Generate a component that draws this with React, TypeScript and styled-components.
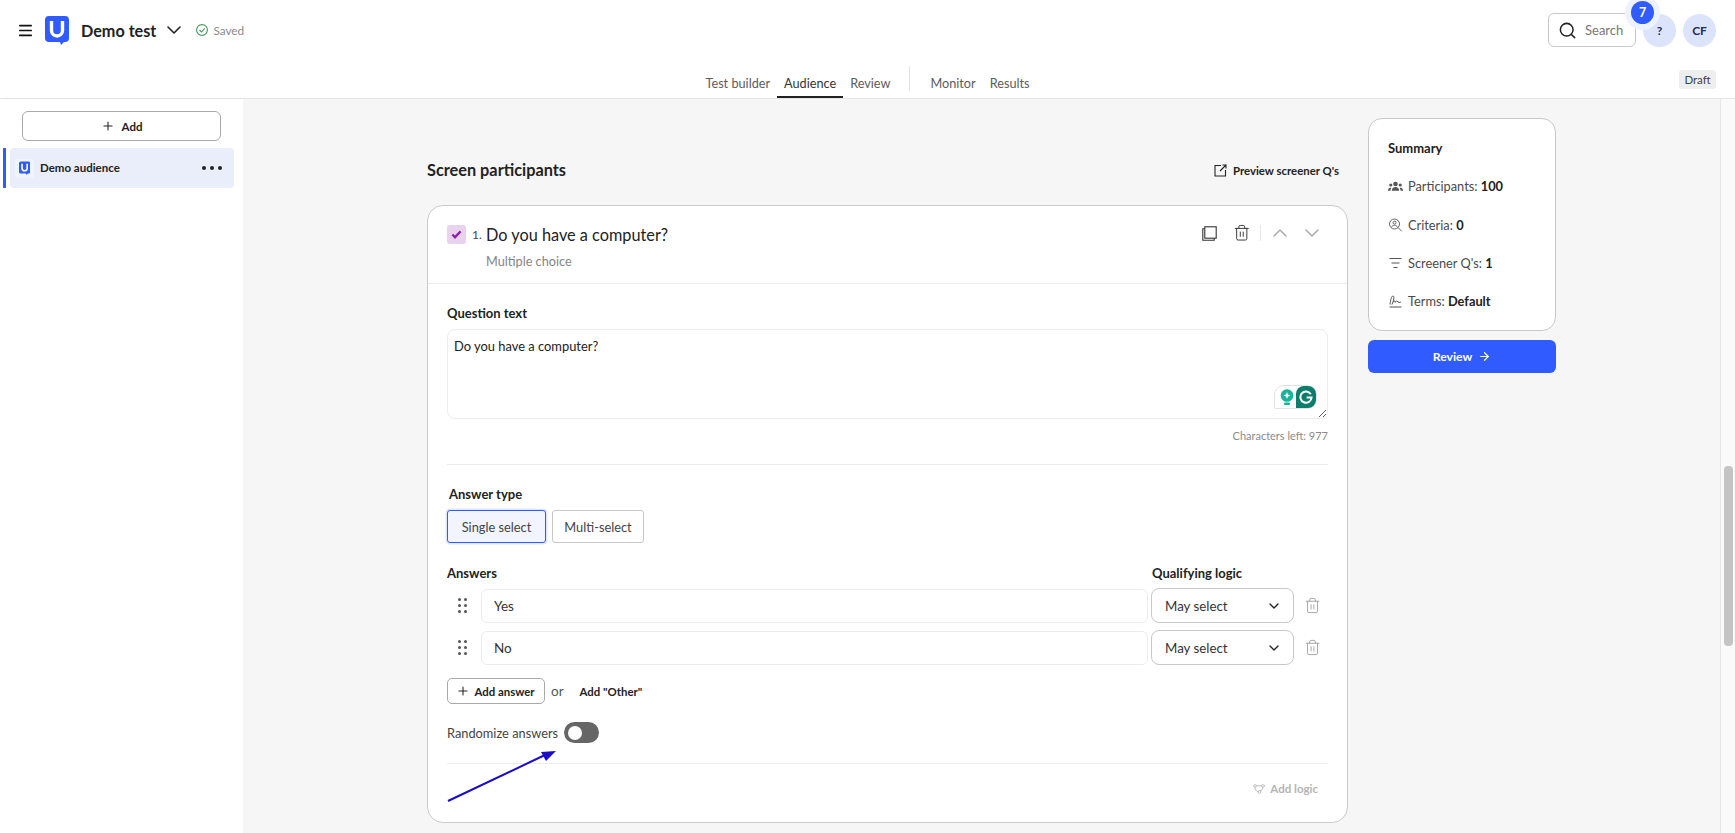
import styled, { createGlobalStyle } from "styled-components";
import { Menu, ChevronDown, ChevronUp, Plus, Search, Trash2, ArrowRight } from "lucide-react";

const GlobalStyle = createGlobalStyle`
  * { box-sizing: border-box; }
  html, body { margin: 0; height: 100%; overflow: hidden; }
  body {
    background: #fff;
    color: #222;
    font-family: Lato, "Open Sans", Arial, sans-serif;
  }
`;

const Page = styled.div`
  height: 833px;
  display: flex;
  flex-direction: column;
`;

const Header = styled.header`
  height: 99px;
  flex: none;
  border-bottom: 1px solid #e7e7e7;
  display: flex;
  flex-direction: column;
`;

const TopBar = styled.div`
  height: 60px;
  display: flex;
  align-items: flex-start;
  justify-content: space-between;
  padding: 13px 19px 0 20px;
`;

const TopLeft = styled.div`
  display: flex;
  align-items: center;
  height: 34px;
`;

const MenuIcon = styled(Menu)`
  margin: 0 11px 0 -3px;
`;

const NameChevron = styled(ChevronDown)`
  margin: 0 9px 0 6px;
`;

const TestName = styled.span`
  font-size: 16.2px;
  font-weight: 700;
  color: #222;
  margin-left: 12px;
`;

const SavedText = styled.span`
  font-size: 11.8px;
  color: #8a8a8a;
  margin-left: 4px;
`;

const TopRight = styled.div`
  display: flex;
  align-items: center;
  height: 34px;
`;

const SearchBox = styled.div`
  width: 88px;
  height: 34px;
  border: 1px solid #c8c8c8;
  border-radius: 6px;
  display: flex;
  align-items: center;
  padding-left: 9px;
  gap: 8px;
  font-size: 13px;
  color: #777;
  margin-right: 7px;
`;

const Circle = styled.div<{ $gap?: number }>`
  position: relative;
  width: 33px;
  height: 33px;
  border-radius: 50%;
  background: #dce4fb;
  color: #1d2a5e;
  font-size: 12px;
  font-weight: 700;
  display: flex;
  align-items: center;
  justify-content: center;
  margin-left: ${(p) => p.$gap ?? 0}px;
`;

const Badge = styled.div`
  position: absolute;
  top: -13px;
  left: -12px;
  width: 23px;
  height: 23px;
  border-radius: 50%;
  background: #2f5bff;
  color: #fff;
  font-size: 12.5px;
  font-weight: 700;
  display: flex;
  align-items: center;
  justify-content: center;
  box-shadow: 0 0 0 6px #eef2fe;
`;

const TabRow = styled.div`
  flex: 1;
  display: grid;
  grid-template-columns: 1fr auto 1fr;
`;

const Tabs = styled.nav`
  grid-column: 2;
  display: flex;
  align-items: stretch;
  height: 38px;
`;

const Tab = styled.a<{ $active?: boolean }>`
  display: flex;
  align-items: center;
  padding: 9px 7px 0;
  font-size: 12.7px;
  color: ${(p) => (p.$active ? "#333" : "#5c5c5c")};
  border-bottom: 2px solid ${(p) => (p.$active ? "#222" : "transparent")};
`;

const TabDivider = styled.div`
  width: 1px;
  height: 25px;
  margin: 6px 13px 0 12px;
  background: #e3e3e3;
`;

const DraftTag = styled.div`
  justify-self: end;
  align-self: start;
  margin: 10px 19px 0 0;
  width: 37px;
  height: 19px;
  border-radius: 3px;
  background: #eeeeee;
  font-size: 11.5px;
  color: #444;
  display: flex;
  align-items: center;
  justify-content: center;
`;

const Body = styled.div`
  flex: 1;
  min-height: 0;
  display: flex;
`;

const Sidebar = styled.aside`
  width: 243px;
  flex: none;
  background: #fff;
  box-shadow: 2px 0 4px rgba(0, 0, 0, 0.05);
  padding-top: 12px;
`;

const AddButton = styled.button`
  display: flex;
  align-items: center;
  justify-content: center;
  gap: 7px;
  width: 199px;
  height: 30px;
  margin-left: 22px;
  border: 1px solid #a9a9a9;
  border-radius: 6px;
  background: #fff;
  font: 700 11.5px Lato, sans-serif;
  color: #222;
`;

const AudienceRow = styled.div`
  display: flex;
  align-items: center;
  height: 40px;
  margin: 7px 9px 0 3px;
  border-left: 3px solid #2f5bff;
  padding-left: 4px;
`;

const AudienceBody = styled.div`
  flex: 1;
  height: 40px;
  display: flex;
  align-items: center;
  background: #eaeefb;
  border-radius: 4px;
  padding: 0 12px 0 5px;
`;

const LogoTile = styled.div`
  width: 19px;
  height: 19px;
  border-radius: 3px;
  background: #f1f4fd;
  display: flex;
  align-items: center;
  justify-content: center;
`;

const AudienceName = styled.span`
  flex: 1;
  font-size: 11.5px;
  font-weight: 700;
  margin: 0 0 1px 6px;
`;

const Dots = styled.div`
  display: flex;
  gap: 4px;
  span {
    width: 4px;
    height: 4px;
    border-radius: 50%;
    background: #222;
  }
`;

const Main = styled.main`
  flex: 1;
  background: #f6f6f6;
  padding: 19px 0 0 184px;
  display: flex;
  align-items: flex-start;
  gap: 20px;
  overflow: hidden;
`;

const Scrollbar = styled.div`
  width: 15px;
  flex: none;
  background: #fafafa;
  border-left: 1px solid #e6e6e6;
  padding: 367px 2px 0 3px;
`;

const ScrollThumb = styled.div`
  height: 180px;
  border-radius: 4px;
  background: #c4c4c4;
`;

const Column = styled.div`
  width: 921px;
  flex: none;
`;

const SectionHead = styled.div`
  display: flex;
  align-items: center;
  justify-content: space-between;
  height: 30px;
  margin: 37px 9px 20px 0;
`;

const SectionTitle = styled.h2`
  margin: 0 0 2px;
  font-size: 16.3px;
  font-weight: 700;
  color: #222;
`;

const PreviewLink = styled.a`
  display: flex;
  align-items: center;
  gap: 6px;
  font-size: 11.4px;
  font-weight: 700;
  color: #222;
`;

const Card = styled.section`
  height: 618px;
  background: #fff;
  border: 1px solid #cbcbcb;
  border-radius: 16px;
`;

const CardHead = styled.div`
  height: 78px;
  border-bottom: 1px solid #ebebeb;
  padding: 19px 23px 0 19px;
  display: flex;
  align-items: flex-start;
`;

const TypeTile = styled.div`
  width: 19px;
  height: 19px;
  border-radius: 3px;
  background: #e8d2ee;
  display: flex;
  align-items: center;
  justify-content: center;
  flex: none;
`;

const QuestionNo = styled.span`
  font-size: 12px;
  color: #444;
  width: 14px;
  margin-left: 6px;
  line-height: 19px;
  flex: none;
`;

const QuestionHead = styled.div`
  flex: 1;
`;

const QuestionTitle = styled.div`
  font-size: 16.3px;
  line-height: 20px;
  color: #222;
`;

const QuestionKind = styled.div`
  font-size: 12.7px;
  color: #858585;
  margin-top: 8px;
`;

const CardTools = styled.div`
  display: flex;
  align-items: center;
  height: 16px;
  color: #333;
`;

const ToolTrash = styled(Trash2)`
  margin-left: 16px;
`;

const ToolDivider = styled.div`
  width: 1px;
  height: 16px;
  background: #e6e6e6;
  margin: 0 7px 0 10px;
`;

const MoveDown = styled(ChevronDown)`
  margin-left: 8px;
`;

const CardBody = styled.div`
  padding: 21px 19px 0;
`;

const FieldLabel = styled.div<{ $indent?: number; $top?: number }>`
  font-size: 13px;
  font-weight: 700;
  line-height: 17px;
  color: #222;
  margin-left: ${(p) => p.$indent ?? 0}px;
  margin-top: ${(p) => p.$top ?? 0}px;
`;

const TextareaWrap = styled.div`
  position: relative;
  margin-top: 7px;
  height: 90px;
`;

const QuestionInput = styled.textarea`
  display: block;
  width: 100%;
  height: 90px;
  resize: vertical;
  border: 1px solid #ececec;
  border-radius: 8px;
  padding: 8px 6px;
  font: 12.9px Lato, sans-serif;
  color: #222;
  outline: none;
`;

const Grammarly = styled.div`
  position: absolute;
  right: 11px;
  bottom: 10px;
  width: 43px;
  height: 24px;
  border: 1px solid #e4e4e4;
  border-radius: 10px 10px 10px 0;
  background: #fff;
  display: flex;
  align-items: center;
  justify-content: space-between;
  padding-left: 5px;
`;

const GrammarlyBadge = styled.div`
  width: 20px;
  height: 22px;
  border-radius: 8px 8px 8px 0;
  background: #0a7d6c;
  display: flex;
  align-items: center;
  justify-content: center;
`;

const CharsLeft = styled.div`
  text-align: right;
  font-size: 11px;
  color: #8a8a8a;
  margin-top: 10px;
  line-height: 14px;
`;

const Rule = styled.hr`
  border: 0;
  border-top: 1px solid #ebebeb;
  margin: 21px 0 0;
`;

const SegmentRow = styled.div`
  display: flex;
  gap: 6px;
  margin-top: 7px;
`;

const Segment = styled.button<{ $active?: boolean }>`
  height: 33px;
  padding: 0;
  width: ${(p) => (p.$active ? 99 : 92)}px;
  border-radius: 3px;
  border: 1px solid ${(p) => (p.$active ? "#2f5bff" : "#c8c8c8")};
  background: ${(p) => (p.$active ? "#f2f5ff" : "#fff")};
  box-shadow: ${(p) => (p.$active ? "0 0 0 1.5px #dfe6ff" : "none")};
  font: 12.8px Lato, sans-serif;
  color: #444;
`;

const AnswersHead = styled.div`
  display: flex;
  justify-content: space-between;
  margin: 22px 0 -1px;
`;

const QualifyingLabel = styled(FieldLabel)`
  width: 176px;
`;

const AnswerRow = styled.div`
  display: flex;
  align-items: center;
  margin-top: 7px;
  height: 35px;
`;

const DragHandle = styled.div`
  width: 34px;
  flex: none;
  display: grid;
  grid-template-columns: 3px 3px;
  gap: 3px;
  justify-content: center;
  padding-right: 4px;
  span {
    width: 3px;
    height: 3px;
    border-radius: 50%;
    background: #555;
  }
`;

const AnswerInput = styled.input`
  width: 667px;
  height: 34px;
  flex: none;
  border: 1px solid #ececec;
  border-radius: 6px;
  padding: 0 12px;
  font: 13.5px Lato, sans-serif;
  color: #333;
  outline: none;
`;

const LogicSelect = styled.div`
  width: 143px;
  height: 35px;
  flex: none;
  margin-left: 3px;
  border: 1px solid #c8c8c8;
  border-radius: 8px;
  display: flex;
  align-items: center;
  justify-content: space-between;
  padding: 0 11px 0 13px;
  font-size: 13.3px;
  color: #333;
`;

const RowTrash = styled.div`
  color: #a0a0a0;
  margin-left: 10px;
  display: flex;
`;

const AddRow = styled.div`
  display: flex;
  align-items: center;
  margin-top: 13px;
  font-size: 13.5px;
  color: #555;
`;

const AddAnswerButton = styled.button`
  width: 98px;
  height: 26px;
  border: 1px solid #a9a9a9;
  border-radius: 5px;
  background: #fff;
  display: flex;
  align-items: center;
  justify-content: center;
  gap: 4px;
  padding: 0 1px 0 0;
  font: 700 11.4px Lato, sans-serif;
  color: #222;
  margin-right: 6px;
`;

const AddOther = styled.span`
  font-size: 11.4px;
  font-weight: 700;
  color: #222;
  margin-left: 16px;
`;

const RandomRow = styled.div`
  display: flex;
  align-items: center;
  gap: 6px;
  margin-top: 18px;
  font-size: 12.8px;
  color: #444;
`;

const Toggle = styled.div`
  width: 35px;
  height: 21px;
  border-radius: 11px;
  background: #666;
  display: flex;
  align-items: center;
  padding-left: 4px;
  span {
    width: 14px;
    height: 14px;
    border-radius: 50%;
    background: #fff;
  }
`;

const LogicFooter = styled.div`
  position: relative;
  margin-top: 20px;
  border-top: 1px solid #ebebeb;
  display: flex;
  justify-content: flex-end;
  padding: 18px 10px 0 0;
  color: #b4b4b4;
  font-size: 11.5px;
  font-weight: 700;
  gap: 5px;
  align-items: center;
`;

const Annotation = styled.svg`
  position: absolute;
  left: 0;
  top: -14px;
  overflow: visible;
`;

const SideColumn = styled.div`
  width: 188px;
  flex: none;
`;

const SummaryCard = styled.div`
  height: 213px;
  background: #fff;
  border: 1px solid #c8c8c8;
  border-radius: 14px;
  padding: 20px 0 0 19px;
`;

const SummaryTitle = styled.div`
  font-size: 13px;
  font-weight: 700;
  color: #222;
  line-height: 18px;
  margin-bottom: 10px;
`;

const SummaryRow = styled.div`
  height: 38.4px;
  display: flex;
  align-items: center;
  gap: 5px;
  font-size: 12.8px;
  color: #4a4a4a;
  b {
    color: #222;
  }
`;

const ReviewButton = styled.button`
  width: 100%;
  height: 33px;
  margin-top: 9px;
  border: 0;
  border-radius: 6px;
  background: #2f5bff;
  color: #fff;
  font: 700 12.2px Lato, sans-serif;
  display: flex;
  align-items: center;
  justify-content: center;
  gap: 6px;
`;

function Logo({ size }: { size: number }) {
  return (
    <svg width={size * 0.8} height={size} viewBox="0 0 24 30">
      <path
        d="M4 1h16a4 4 0 0 1 4 4v18a4 4 0 0 1-4 4h-1l-3 3-1-3H4a4 4 0 0 1-4-4V5a4 4 0 0 1 4-4z"
        fill="#2f5bff"
      />
      <path d="M6.5 6v9.5a5.5 5.5 0 0 0 11 0V6" fill="none" stroke="#fff" strokeWidth="3.4" />
    </svg>
  );
}

function CopyIcon() {
  return (
    <svg width="15" height="15" viewBox="0 0 15 15" fill="none" stroke="#333" strokeWidth="1.1">
      <rect x="2.8" y="0.8" width="11.4" height="11.4" />
      <path d="M2.8 2.8H0.8v11.4h11.4v-2" />
    </svg>
  );
}

function ExternalIcon() {
  return (
    <svg width="13" height="13" viewBox="0 0 13 13" fill="none" stroke="#222" strokeWidth="1.1">
      <path d="M7 1.5H1v10.5h10.5V6" />
      <path d="M6 7l6-6M8.5 1H12v3.5" />
    </svg>
  );
}

function ParticipantsIcon() {
  return (
    <svg width="15" height="14" viewBox="0 0 15 14" fill="#555">
      <circle cx="7.5" cy="5" r="2.3" />
      <circle cx="2.8" cy="6" r="1.6" />
      <circle cx="12.2" cy="6" r="1.6" />
      <path d="M3.8 11.8c0-2.6 1.6-3.8 3.7-3.8s3.7 1.2 3.7 3.8zM0 11.8c0-1.8.9-3 2.4-3 .4 0 .7.1.9.2-.6.8-.9 1.7-.9 2.8zM15 11.8c0-1.8-.9-3-2.4-3-.4 0-.7.1-.9.2.6.8.9 1.7.9 2.8z" />
    </svg>
  );
}

function CriteriaIcon() {
  return (
    <svg width="15" height="14" viewBox="0 0 14 14" fill="none" stroke="#555" strokeWidth="0.9">
      <circle cx="6" cy="6" r="5" />
      <circle cx="6" cy="4.6" r="1.5" />
      <path d="M3.2 9.2c.4-1.5 1.5-2 2.8-2s2.4.5 2.8 2M9.6 9.6l3.6 3.6" />
    </svg>
  );
}

function ScreenerIcon() {
  return (
    <svg width="15" height="14" viewBox="0 0 14 14" fill="none" stroke="#555" strokeWidth="1">
      <path d="M1 2.5h12M3 7h8M5 11.5h4" />
    </svg>
  );
}

function TermsIcon() {
  return (
    <svg width="15" height="14" viewBox="0 0 14 14" fill="none" stroke="#555" strokeWidth="1">
      <path d="M1 13h12" />
      <path d="M1.5 10.5C2 6 3 2 4.5 2S5.5 6 3.5 10.5M4.5 8c1-1.5 2-1.5 2 0s1-1.5 2-1 1 1.5 2 1.5 1.5-.5 2-.5" />
    </svg>
  );
}

function LogicIcon() {
  return (
    <svg width="12" height="10" viewBox="0 0 12 10" fill="none" stroke="#b4b4b4" strokeWidth="0.9">
      <rect x="0.5" y="0.8" width="3" height="2" rx="1" />
      <rect x="8.5" y="0.8" width="3" height="2" rx="1" />
      <circle cx="6.5" cy="8" r="1.4" />
      <path d="M3.5 1.8h5M2 2.8c0 2.6 1.2 4.4 3.1 5.1M10 2.8c0 1.8-.6 3-1.6 3.6H6.5" />
    </svg>
  );
}

function GripDots() {
  return (
    <DragHandle>
      {Array.from({ length: 6 }).map((_, i) => (
        <span key={i} />
      ))}
    </DragHandle>
  );
}

const answers = ["Yes", "No"];

export default function App() {
  return (
    <Page>
      <GlobalStyle />
      <Header>
        <TopBar>
          <TopLeft>
            <MenuIcon size={17} strokeWidth={2.4} color="#111" />
            <Logo size={30} />
            <TestName>Demo test</TestName>
            <NameChevron size={24} strokeWidth={1.6} color="#222" />
            <svg width="14" height="14" viewBox="0 0 14 14" fill="none" stroke="#3f9a5a" strokeWidth="1.1">
              <circle cx="7" cy="7" r="5.4" />
              <path d="M4.5 7l2 2 3.2-3.6" />
            </svg>
            <SavedText>Saved</SavedText>
          </TopLeft>
          <TopRight>
            <SearchBox>
              <Search size={19} strokeWidth={1.9} color="#222" />
              Search
            </SearchBox>
            <Circle>
              ?<Badge>7</Badge>
            </Circle>
            <Circle $gap={7}>CF</Circle>
          </TopRight>
        </TopBar>
        <TabRow>
          <Tabs>
            <Tab>Test builder</Tab>
            <Tab $active>Audience</Tab>
            <Tab>Review</Tab>
            <TabDivider />
            <Tab>Monitor</Tab>
            <Tab>Results</Tab>
          </Tabs>
          <DraftTag>Draft</DraftTag>
        </TabRow>
      </Header>
      <Body>
        <Sidebar>
          <AddButton>
            <Plus size={14} strokeWidth={1.8} />
            Add
          </AddButton>
          <AudienceRow>
            <AudienceBody>
              <LogoTile>
                <Logo size={14} />
              </LogoTile>
              <AudienceName>Demo audience</AudienceName>
              <Dots>
                <span />
                <span />
                <span />
              </Dots>
            </AudienceBody>
          </AudienceRow>
        </Sidebar>
        <Main>
          <Column>
            <SectionHead>
              <SectionTitle>Screen participants</SectionTitle>
              <PreviewLink>
                <ExternalIcon />
                Preview screener Q's
              </PreviewLink>
            </SectionHead>
            <Card>
              <CardHead>
                <TypeTile>
                  <svg width="11" height="10" viewBox="0 0 11 10" fill="#8a24a8">
                    <path d="M0.6 5.2L2.2 3.7 4 5.4 8.8 0.6 10.4 2.2 4 9z" />
                  </svg>
                </TypeTile>
                <QuestionNo>1.</QuestionNo>
                <QuestionHead>
                  <QuestionTitle>Do you have a computer?</QuestionTitle>
                  <QuestionKind>Multiple choice</QuestionKind>
                </QuestionHead>
                <CardTools>
                  <CopyIcon />
                  <ToolTrash size={17.5} strokeWidth={1.3} />
                  <ToolDivider />
                  <ChevronUp size={24} strokeWidth={1.5} color="#aaa" />
                  <MoveDown size={24} strokeWidth={1.5} color="#aaa" />
                </CardTools>
              </CardHead>
              <CardBody>
                <FieldLabel>Question text</FieldLabel>
                <TextareaWrap>
                  <QuestionInput readOnly value="Do you have a computer?" />
                  <Grammarly>
                    <svg width="14" height="17" viewBox="0 0 14 17">
                      <circle cx="7" cy="6.5" r="6.3" fill="#15b59a" />
                      <path d="M7 3l1 2.5L10.5 6.5 8 7.5 7 10 6 7.5 3.5 6.5 6 5.5z" fill="#fff" />
                      <rect x="4" y="13.5" width="6" height="2.5" rx="1" fill="#15b59a" />
                    </svg>
                    <GrammarlyBadge>
                      <svg width="14" height="14" viewBox="0 0 14 14" fill="none" stroke="#fff" strokeWidth="2">
                        <path d="M11.8 4.2A5.6 5.6 0 1 0 12.6 7.5H7.6" />
                      </svg>
                    </GrammarlyBadge>
                  </Grammarly>
                </TextareaWrap>
                <CharsLeft>Characters left: 977</CharsLeft>
                <Rule />
                <FieldLabel $indent={2} $top={21}>
                  Answer type
                </FieldLabel>
                <SegmentRow>
                  <Segment $active>Single select</Segment>
                  <Segment>Multi-select</Segment>
                </SegmentRow>
                <AnswersHead>
                  <FieldLabel>Answers</FieldLabel>
                  <QualifyingLabel>Qualifying logic</QualifyingLabel>
                </AnswersHead>
                {answers.map((answer) => (
                  <AnswerRow key={answer}>
                    <GripDots />
                    <AnswerInput readOnly value={answer} />
                    <LogicSelect>
                      May select
                      <ChevronDown size={16} strokeWidth={2} color="#222" />
                    </LogicSelect>
                    <RowTrash>
                      <Trash2 size={17} strokeWidth={1.3} />
                    </RowTrash>
                  </AnswerRow>
                ))}
                <AddRow>
                  <AddAnswerButton>
                    <Plus size={14} strokeWidth={1.8} />
                    Add answer
                  </AddAnswerButton>
                  or
                  <AddOther>Add "Other"</AddOther>
                </AddRow>
                <RandomRow>
                  Randomize answers
                  <Toggle>
                    <span />
                  </Toggle>
                </RandomRow>
                <LogicFooter>
                  <LogicIcon />
                  Add logic
                  <Annotation width="110" height="52" viewBox="0 0 110 52">
                    <path d="M1 51L98 5" stroke="#1a0dc4" strokeWidth="2" />
                    <path d="M109 1L94 2l5 9z" fill="#1a0dc4" />
                  </Annotation>
                </LogicFooter>
              </CardBody>
            </Card>
          </Column>
          <SideColumn>
            <SummaryCard>
              <SummaryTitle>Summary</SummaryTitle>
              <SummaryRow>
                <ParticipantsIcon />
                <span>
                  Participants: <b>100</b>
                </span>
              </SummaryRow>
              <SummaryRow>
                <CriteriaIcon />
                <span>
                  Criteria: <b>0</b>
                </span>
              </SummaryRow>
              <SummaryRow>
                <ScreenerIcon />
                <span>
                  Screener Q's: <b>1</b>
                </span>
              </SummaryRow>
              <SummaryRow>
                <TermsIcon />
                <span>
                  Terms: <b>Default</b>
                </span>
              </SummaryRow>
            </SummaryCard>
            <ReviewButton>
              Review
              <ArrowRight size={13} strokeWidth={2.2} />
            </ReviewButton>
          </SideColumn>
        </Main>
        <Scrollbar>
          <ScrollThumb />
        </Scrollbar>
      </Body>
    </Page>
  );
}
